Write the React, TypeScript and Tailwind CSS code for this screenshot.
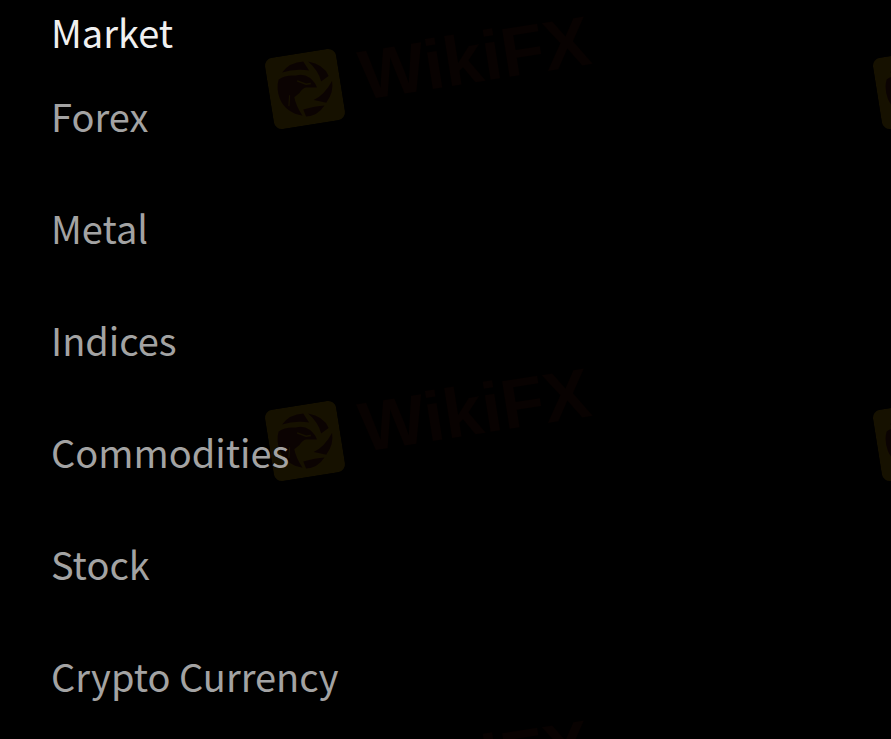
import React from 'react';

const MARKETS = ['Forex', 'Metal', 'Indices', 'Commodities', 'Stock', 'Crypto Currency'];

const BrandMark: React.FC = () => (
    <svg viewBox="0 0 70 70" className="w-[72px] h-[72px] shrink-0 opacity-10" aria-hidden="true">
        <rect width="70" height="70" rx="8" fill="#d8a400" />
        {/* Shutter blades with the eagle head in the middle */}
        <g transform="rotate(9 35 35) translate(-20 -19) scale(0.3333)" fill="#702018">
            <path d="M98 114 Q120 84 160 82 L177 108 Q136 102 98 114 Z" />
            <path d="M174 82 Q220 90 234 124 L212 140 Q204 108 174 82 Z" />
            <path d="M244 138 Q250 172 227 202 L190 194 Q222 180 244 138 Z" />
            <path d="M168 242 Q202 241 222 210 Q194 212 160 222 Z" />
            <path d="M88 134 Q108 120 138 123 Q160 116 180 130 Q196 144 200 158 Q184 158 168 158 Q158 160 149 174 L134 186 Q138 210 158 240 Q110 232 92 192 Q80 160 88 134 Z" />
            <path d="M142 138 L168 148 L182 146" fill="none" stroke="#d8a400" strokeWidth="4" />
            <path d="M120 180 L118 212" fill="none" stroke="#d8a400" strokeWidth="3" />
        </g>
    </svg>
);

const Watermark: React.FC = () => (
    <div className="flex items-center gap-5 h-[72px] origin-[36px_36px] -rotate-9">
        <BrandMark />
        <span className="font-['Liberation_Sans',sans-serif] text-[70px] leading-[64px] pb-2 font-bold text-[#ff3020]/3">
            WikiFX
        </span>
    </div>
);

export default function App() {
    return (
        <div className="relative min-h-screen overflow-hidden bg-black font-['Noto_Sans_CJK_SC',sans-serif]">
            {/* Repeating watermark behind the content */}
            <div className="absolute inset-0 overflow-hidden pointer-events-none" aria-hidden="true">
                <div className="grid grid-cols-[608px_608px] auto-rows-[352px] pl-[269px] pt-[53px]">
                    {[0, 1, 2, 3, 4, 5].map((i) => (
                        <Watermark key={i} />
                    ))}
                </div>
            </div>

            <nav aria-labelledby="market-title" className="relative px-[51px] pt-1 pb-4 text-[38px] leading-[56px]">
                <h2 id="market-title" className="text-[#f0f0f0]">Market</h2>
                <ul className="flex flex-col gap-14 pt-7">
                    {MARKETS.map((name) => (
                        <li key={name}>
                            <a href="#" className="text-[#a3a3a3]">{name}</a>
                        </li>
                    ))}
                </ul>
            </nav>
        </div>
    );
}
